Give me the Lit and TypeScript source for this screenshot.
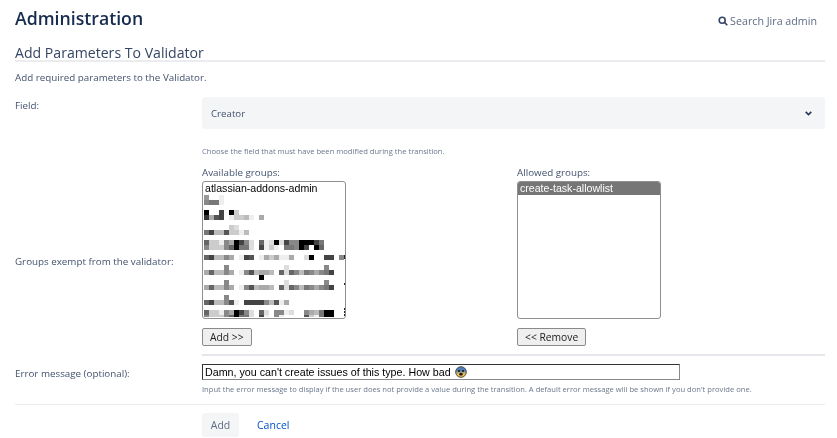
import { LitElement, html, css, svg } from "lit";
import { customElement } from "lit/decorators.js";

// Each row: [y offset from the top of the mosaic, one grey level per 5px cell]. '.' is an empty cell.
const MOSAIC: [number, string][] = [
  [0, "9..e"],
  [5, "877e"],
  [15, "0..4.0c"],
  [20, "3a54.eccbe.a"],
  [30, ".....cd"],
  [35, "74bb5cceb"],
  [45, "6cce8a048d.6ed0d48800047"],
  [50, "8ccc86077d.4ece.77804f06"],
  [60, "64bb8a.e45.eacaeea.fd0ff44.8"],
  [70, "....8...........d.......8"],
  [75, "a6bb8a.e85baab.6d68b78a874.f"],
  [80, "...........0"],
  [85, "....8...........d.......8"],
  [90, "a6bb8a.e85baab.6d68b78a874.f"],
  [100, "....8"],
  [105, "64bb85ef44448b5ea"],
  [115, "6cce8a048d.6d.88ed..8ab700"],
  [120, "8ccc86077d.4e.8eff..5ce700"],
];

const SPECKS: [number, number][] = [
  [60, 2], [62, 2], [88, 2], [113, 2], [116, 2], [119, 2],
];

@customElement("app-root")
export class AppRoot extends LitElement {
  static styles = css`
    :host {
      display: block;
      height: 438px;
      overflow: hidden;
      background: #fff;
      color: #42526e;
      font-family: "Open Sans", "Noto Sans", sans-serif;
      font-size: 9.8px;
    }
    .page { padding: 0 12px 0 15px; filter: blur(0.3px); }
    .top { display: flex; justify-content: space-between; align-items: center; height: 36px; }
    h1 { margin: 0; font-size: 17.7px; font-weight: 600; color: #172b4d; line-height: 36px; }
    .search { display: flex; align-items: center; gap: 2px; font-size: 10.7px; margin: 6px 8px 0 0; color: #5e6c84; }
    .search svg { display: block; }
    h2 {
      margin: 7px 0 0;
      height: 19px;
      box-sizing: border-box;
      font-size: 14.1px;
      font-weight: 500;
      line-height: 19px;
      color: #344563;
      border-bottom: 2px solid #ebecf0;
    }
    .intro { margin: 9px 0 0; line-height: 14px; }
    .row { display: grid; grid-template-columns: 187px 1fr; }
    .field { margin-top: 12px; }
    .label { line-height: 14px; padding-top: 2px; }
    .select {
      height: 32px;
      background: #f4f5f7;
      border-radius: 3px;
      display: flex;
      align-items: center;
      justify-content: space-between;
      padding: 0 13px 0 9px;
      font-size: 9.7px;
    }
    .hint { font-size: 7.6px; color: #6b778c; line-height: 11px; }
    .field .hint { margin-top: 17px; }
    .groups { align-items: center; margin-top: 9px; }
    .groups .label { padding-top: 12px; }
    .pickers { display: grid; grid-template-columns: 315px 1fr; }
    .cap { line-height: 14px; margin-bottom: 1px; }
    .list {
      width: 144px;
      height: 138px;
      box-sizing: border-box;
      border: 1px solid #8f8f8f;
      border-radius: 3px;
      overflow: hidden;
      color: #000;
      font-family: "Liberation Sans", Arial, sans-serif;
      font-size: 10.6px;
    }
    .opt { line-height: 13px; padding: 0 2px; height: 13px; }
    .opt.sel { background: #767676; color: #fff; }
    .list svg { display: block; }
    .btn {
      display: block;
      margin-top: 9px;
      height: 18px;
      box-sizing: border-box;
      padding: 0 7px;
      border: 1px solid #8a8a8a;
      border-radius: 2px;
      background: #efefef;
      color: #222;
      font-family: "Open Sans", sans-serif;
      font-size: 10.3px;
      line-height: 14px;
    }
    .sep { height: 2px; background: #e6e7ec; }
    .sep.mid { margin: 8px 0 0 187px; }
    .error { margin-top: 8px; }
    .error .label { padding-top: 3px; }
    .msg {
      width: 478px;
      height: 16px;
      box-sizing: border-box;
      border: 1px solid #000;
      border-color: #333 #888 #888 #333;
      display: flex;
      align-items: center;
      gap: 4px;
      padding-left: 2px;
      color: #000;
      font-family: "Liberation Sans", Arial, sans-serif;
      font-size: 10.7px;
      white-space: nowrap;
    }
    .error .hint { margin-top: 4px; }
    .sep.end { margin-top: 9px; height: 1px; background: #ebecf0; }
    .actions { display: flex; align-items: center; gap: 18px; margin: 8px 0 0 187px; }
    .primary {
      height: 24px;
      width: 37px;
      display: flex;
      align-items: center;
      justify-content: center;
      background: #f4f5f7;
      border-radius: 3px;
      font-size: 10.5px;
      color: #5e6c84;
    }
    .cancel { font-size: 10.5px; color: #0052cc; }
  `;

  private mosaic() {
    const cells = MOSAIC.flatMap(([y, row]) =>
      [...row].map((c, i) =>
        c === "."
          ? null
          : svg`<rect x=${i * 5 + 1} y=${y} width="5" height="5" fill=${"#" + c + c + c} />`
      )
    );
    const specks = SPECKS.map(
      ([y, h]) => svg`<rect x="141" y=${y} width="1" height=${h} fill="#222" />`
    );
    return html`<svg width="142" height="122" viewBox="0 0 142 122" aria-hidden="true">${cells}${specks}</svg>`;
  }

  render() {
    return html`
      <div class="page">
        <div class="top">
          <h1>Administration</h1>
          <div class="search">
            <svg width="10" height="10" viewBox="0 0 10 10" fill="none" stroke="#344563" stroke-width="1.6">
              <circle cx="4.2" cy="4.2" r="3" />
              <path d="M6.4 6.4 9.3 9.3" />
            </svg>
            <span>Search Jira admin</span>
          </div>
        </div>
        <h2>Add Parameters To Validator</h2>
        <p class="intro">Add required parameters to the Validator.</p>

        <div class="row field">
          <div class="label">Field:</div>
          <div>
            <div class="select">
              <span>Creator</span>
              <svg width="7" height="5" viewBox="0 0 7 5" fill="none" stroke="#253858" stroke-width="1.6">
                <path d="M.7 .9 3.5 3.6 6.3 .9" />
              </svg>
            </div>
            <div class="hint">Choose the field that must have been modified during the transition.</div>
          </div>
        </div>

        <div class="row groups">
          <div class="label">Groups exempt from the validator:</div>
          <div class="pickers">
            <div>
              <div class="cap">Available groups:</div>
              <div class="list">
                <div class="opt">atlassian-addons-admin</div>
                ${this.mosaic()}
              </div>
              <button class="btn">Add &gt;&gt;</button>
            </div>
            <div>
              <div class="cap">Allowed groups:</div>
              <div class="list">
                <div class="opt sel">create-task-allowlist</div>
              </div>
              <button class="btn">&lt;&lt; Remove</button>
            </div>
          </div>
        </div>
        <div class="sep mid"></div>

        <div class="row error">
          <div class="label">Error message (optional):</div>
          <div>
            <div class="msg">
              <span>Damn, you can't create issues of this type. How bad</span>
              <svg width="12" height="12" viewBox="0 0 13 13">
                <defs>
                  <linearGradient id="fear" x1="0" y1="0" x2="0" y2="1">
                    <stop offset="0.35" stop-color="#4f7fb8" />
                    <stop offset="0.7" stop-color="#f2c14e" />
                  </linearGradient>
                </defs>
                <circle cx="6.5" cy="6.5" r="5.8" fill="url(#fear)" stroke="#333" stroke-width="0.9" />
                <circle cx="4.3" cy="5.4" r="1.1" fill="#111" />
                <circle cx="8.7" cy="5.4" r="1.1" fill="#111" />
                <ellipse cx="6.5" cy="9" rx="1.9" ry="1.6" fill="#222" />
              </svg>
            </div>
            <div class="hint">Input the error message to display if the user does not provide a value during the transition. A default error message will be shown if you don't provide one.</div>
          </div>
        </div>
        <div class="sep end"></div>

        <div class="actions">
          <div class="primary">Add</div>
          <div class="cancel">Cancel</div>
        </div>
      </div>
    `;
  }
}
